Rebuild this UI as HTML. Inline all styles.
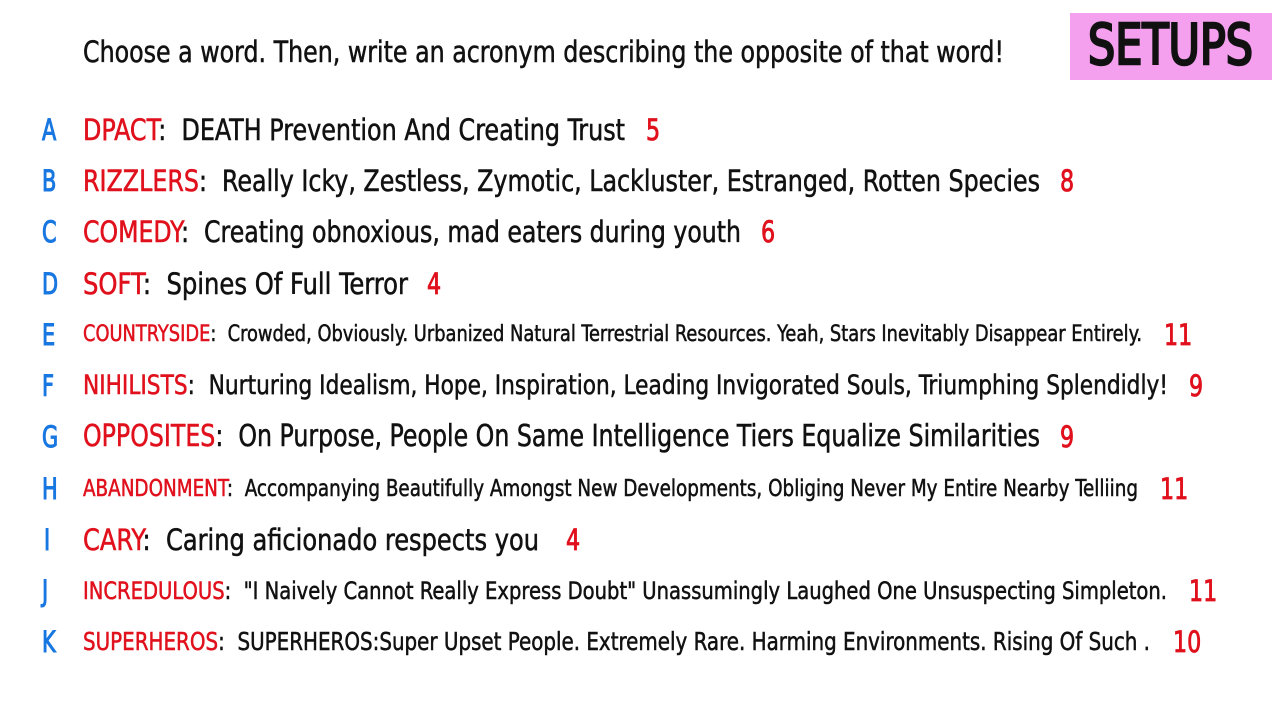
<!DOCTYPE html>
<html><head><meta charset="utf-8"><style>
body{margin:0;width:1280px;height:720px;background:#fff;position:relative;overflow:hidden;font-family:"Liberation Sans Narrow","DejaVu Sans Condensed","Liberation Sans",sans-serif;-webkit-text-stroke:0.5px currentColor;}
.r{position:absolute;left:0;height:40px;line-height:40px;white-space:nowrap;}
.l{position:absolute;left:42px;color:#1877e0;font-size:29px;display:inline-block;transform:scaleX(0.8);transform-origin:left center;-webkit-text-stroke:1px #1877e0;}
.t{position:absolute;left:83px;display:inline-block;transform-origin:left center;color:#111;}
.a{color:#e0101c}
.n{position:absolute;color:#e0101c;font-size:29px;display:inline-block;transform:scaleX(0.85);transform-origin:left center;-webkit-text-stroke:0.8px #e0101c;}
#h{position:absolute;left:83px;top:32px;line-height:40px;font-size:29px;color:#111;transform-origin:left center;white-space:nowrap}
#s{position:absolute;left:1070px;top:13px;width:202px;height:67px;background:#f4a0ef;}
#st{position:absolute;left:1088px;top:16px;line-height:60px;font-size:56px;color:#111;transform-origin:left center;white-space:nowrap;-webkit-text-stroke:2.5px #111}
</style></head><body>
<div id="h">Choose a word. Then, write an acronym describing the opposite of that word!</div>
<div id="s"></div><div id="st">SETUPS</div>

<div class="r" style="top:110px"><span class="l">A</span><span class="t" style="font-size:29px"><span class="a">DPACT</span>:&nbsp; DEATH Prevention And Creating Trust</span><span class="n" style="left:646px">5</span></div>
<div class="r" style="top:161px"><span class="l">B</span><span class="t" style="font-size:29px"><span class="a">RIZZLERS</span>:&nbsp; Really Icky, Zestless, Zymotic, Lackluster, Estranged, Rotten Species</span><span class="n" style="left:1060px">8</span></div>
<div class="r" style="top:212px"><span class="l">C</span><span class="t" style="font-size:29px"><span class="a">COMEDY</span>:&nbsp; Creating obnoxious, mad eaters during youth</span><span class="n" style="left:761px">6</span></div>
<div class="r" style="top:264px"><span class="l">D</span><span class="t" style="font-size:29px"><span class="a">SOFT</span>:&nbsp; Spines Of Full Terror</span><span class="n" style="left:427px">4</span></div>
<div class="r" style="top:315px"><span class="l">E</span><span class="t" style="font-size:22px"><span class="a">COUNTRYSIDE</span>:&nbsp; Crowded, Obviously. Urbanized Natural Terrestrial Resources. Yeah, Stars Inevitably Disappear Entirely.</span><span class="n" style="left:1164px">11</span></div>
<div class="r" style="top:366px"><span class="l">F</span><span class="t" style="font-size:27px"><span class="a">NIHILISTS</span>:&nbsp; Nurturing Idealism, Hope, Inspiration, Leading Invigorated Souls, Triumphing Splendidly!</span><span class="n" style="left:1189px">9</span></div>
<div class="r" style="top:417px"><span class="l">G</span><span class="t" style="font-size:30px"><span class="a">OPPOSITES</span>:&nbsp; On Purpose, People On Same Intelligence Tiers Equalize Similarities</span><span class="n" style="left:1060px">9</span></div>
<div class="r" style="top:469px"><span class="l">H</span><span class="t" style="font-size:23px"><span class="a">ABANDONMENT</span>:&nbsp; Accompanying Beautifully Amongst New Developments, Obliging Never My Entire Nearby Telliing</span><span class="n" style="left:1160px">11</span></div>
<div class="r" style="top:520px"><span class="l" style="left:44px">I</span><span class="t" style="font-size:29px"><span class="a">CARY</span>:&nbsp; Caring aficionado respects you</span><span class="n" style="left:566px">4</span></div>
<div class="r" style="top:571px"><span class="l">J</span><span class="t" style="font-size:24px"><span class="a">INCREDULOUS</span>:&nbsp; "I Naively Cannot Really Express Doubt" Unassumingly Laughed One Unsuspecting Simpleton.</span><span class="n" style="left:1189px">11</span></div>
<div class="r" style="top:622px"><span class="l">K</span><span class="t" style="font-size:25px"><span class="a">SUPERHEROS</span>:&nbsp; SUPERHEROS:Super Upset People. Extremely Rare. Harming Environments. Rising Of Such .</span><span class="n" style="left:1173px">10</span></div>
<script>
var W=[542,957,658,325,1059,1085,957,1055,456,1084,1067];
var ts=document.querySelectorAll('.t');
ts.forEach(function(e,i){var w=e.getBoundingClientRect().width;e.style.transform='scaleX('+(W[i]/w)+')';});
function fit(id,w){var e=document.getElementById(id);var c=e.getBoundingClientRect().width;e.style.transform='scaleX('+(w/c)+')';}
fit('h',921);fit('st',165);
</script>
</body></html>
